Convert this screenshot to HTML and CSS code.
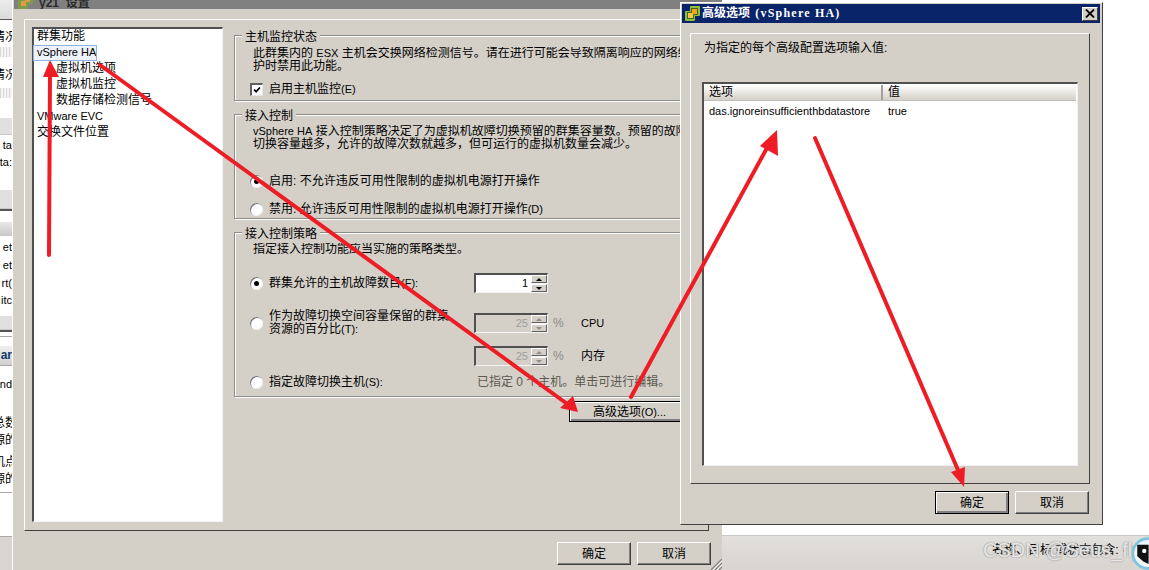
FILE: index.html
```html
<!DOCTYPE html>
<html lang="zh-CN">
<head>
<meta charset="utf-8">
<title>高级选项 (vSphere HA)</title>
<link rel="stylesheet" href="styles.css">
</head>
<body>
<div class="desktop">

  <aside class="strip">
    <div class="s-head"></div><div class="s-line"></div><i></i>
    <div class="s-t">情况</div><i></i><div class="s-stripes"></div><i></i>
    <div class="s-t">情况</div><i></i><div class="s-stripes"></div><i></i>
    <div class="s-bar"></div><i></i>
    <div class="s-l">ta</div><i></i><div class="s-l">ta:</div><i></i>
    <div class="s-bar"></div><div class="s-line"></div><i></i>
    <div class="s-grad"></div><i></i>
    <div class="s-l">et</div><i></i><div class="s-l">et</div><i></i><div class="s-l">rt(</div><i></i><div class="s-l">itc</div><i></i>
    <div class="s-bar"></div><div class="s-line"></div><i></i>
    <div class="s-thin"></div><i></i>
    <div class="s-grad s-navy">ar</div><div class="s-thin"></div><i></i>
    <div class="s-l">and</div><i></i>
    <div class="s-t">总数</div><i></i><div class="s-t">源的</div><i></i>
    <div class="s-t">机点</div><i></i><div class="s-t">源的</div><i></i>
    <div class="s-thin"></div><i></i>
    <div class="s-thin"></div><div class="s-foot"></div>
  </aside>

  <footer class="status">
    <span class="status-label">名称、目标 或状态包含: ·</span>
    <span class="watermark">CSDN @Seus_fly</span>
    <svg class="status-icon" viewBox="0 0 22 40" aria-hidden="true">
      <circle cx="21" cy="20" r="17" fill="#eef5f8" stroke="#7cc4e0" stroke-width="3"/>
      <path d="M9 10h13v22l-6-3-7-6z" fill="#111"/>
      <circle cx="17" cy="17" r="2.5" fill="#fff"/>
    </svg>
  </footer>

  <section class="window main-window">
    <header class="main-title">
      <svg class="logo logo-dim" viewBox="0 0 17 17" aria-hidden="true">
        <path d="M7 1h8a1 1 0 0 1 1 1v8a1 1 0 0 1-1 1h-4v4a1 1 0 0 1-1 1H2a1 1 0 0 1-1-1V7a1 1 0 0 1 1-1h4V2a1 1 0 0 1 1-1z" fill="#7f9a4a"/>
        <path d="M8 4h5v5H8zM4 8h5v5H4z" fill="#d8a040"/>
      </svg>
      <span>y21&nbsp;&nbsp;设置</span>
    </header>

    <div class="panel">
      <nav class="tree">
        <div class="node">群集功能</div>
        <div class="node node-selected"><span class="lat">vSphere HA</span></div>
        <div class="node node-child">虚拟机选项</div>
        <div class="node node-child">虚拟机监控</div>
        <div class="node node-child">数据存储检测信号</div>
        <div class="node"><span class="lat">VMware EVC</span></div>
        <div class="node">交换文件位置</div>
      </nav>

      <div class="settings">
        <fieldset class="group group-monitor">
          <legend>主机监控状态</legend>
          <p class="desc">此群集内的 <span class="lat">ESX</span> 主机会交换网络检测信号。请在进行可能会导致隔离响应的网络维<br>护时禁用此功能。</p>
          <div class="option option-check">
            <span class="check">
              <svg viewBox="0 0 12 12" aria-hidden="true"><path d="M2.5 5.5l2.5 2.5 4.5-5" fill="none" stroke="#000" stroke-width="2"/></svg>
            </span>
            <span>启用主机监控<span class="lat">(E)</span></span>
          </div>
        </fieldset>

        <fieldset class="group group-admission">
          <legend>接入控制</legend>
          <p class="desc"><span class="lat">vSphere HA</span> 接入控制策略决定了为虚拟机故障切换预留的群集容量数。预留的故障<br>切换容量越多，允许的故障次数就越多，但可运行的虚拟机数量会减少。</p>
          <div class="option option-radio option-first"><span class="radio radio-on"></span><span>启用: 不允许违反可用性限制的虚拟机电源打开操作</span></div>
          <div class="option option-radio option-second"><span class="radio"></span><span>禁用: 允许违反可用性限制的虚拟机电源打开操作<span class="lat">(D)</span></span></div>
        </fieldset>

        <fieldset class="group group-policy">
          <legend>接入控制策略</legend>
          <p class="desc">指定接入控制功能应当实施的策略类型。</p>
          <div class="policy-grid">
            <div class="option option-radio"><span class="radio radio-on"></span><span>群集允许的主机故障数目<span class="lat">(F):</span></span></div>
            <div class="value-cell">
              <div class="spin"><span class="spin-value lat">1</span><span class="spin-btns"><b class="up"></b><b class="down"></b></span></div>
            </div>

            <div class="option option-radio"><span class="radio"></span><span class="two-line">作为故障切换空间容量保留的群集<br>资源的百分比<span class="lat">(T):</span></span></div>
            <div class="value-cell">
              <div class="spin spin-off"><span class="spin-value lat">25</span><span class="spin-btns"><b class="up"></b><b class="down"></b></span></div>
              <span class="unit">%</span><span class="res lat">CPU</span>
            </div>

            <div></div>
            <div class="value-cell">
              <div class="spin spin-off"><span class="spin-value lat">25</span><span class="spin-btns"><b class="up"></b><b class="down"></b></span></div>
              <span class="unit">%</span><span class="res">内存</span>
            </div>

            <div class="option option-radio"><span class="radio"></span><span>指定故障切换主机<span class="lat">(S):</span></span></div>
            <div class="value-cell hint">已指定 0 个主机。单击可进行编辑。</div>
          </div>
        </fieldset>

        <button class="btn btn-default btn-advanced" type="button">高级选项<span class="lat">(O)...</span></button>
      </div>
    </div>

    <div class="actions">
      <button class="btn" type="button">确定</button>
      <button class="btn" type="button">取消</button>
    </div>
    <svg class="grip" viewBox="0 0 12 12" aria-hidden="true">
      <path d="M12 1L1 12M12 5L5 12M12 9L9 12" stroke="#808080" stroke-width="1.2"/>
      <path d="M12 3L3 12M12 7L7 12" stroke="#fff" stroke-width="1"/>
    </svg>
  </section>

  <section class="window dialog">
    <header class="dialog-title">
      <svg class="logo" viewBox="0 0 17 17" aria-hidden="true">
        <path d="M7 1h8a1 1 0 0 1 1 1v8a1 1 0 0 1-1 1h-4v4a1 1 0 0 1-1 1H2a1 1 0 0 1-1-1V7a1 1 0 0 1 1-1h4V2a1 1 0 0 1 1-1z" fill="#8fc03c"/>
        <path d="M7 3h7v7H7zM3 7h7v7H3z" fill="#3f6a1f"/>
        <path d="M8 4h5v5H8z" fill="#f4a51c"/><path d="M4 8h5v5H4z" fill="#fbc64a"/>
      </svg>
      <span class="dialog-name">高级选项 <em>(vSphere HA)</em></span>
      <button class="close" type="button" aria-label="关闭">
        <svg viewBox="0 0 10 9" aria-hidden="true"><path d="M1 0.5l8 8M9 0.5l-8 8" stroke="#000" stroke-width="1.8"/></svg>
      </button>
    </header>
    <div class="dialog-panel">
      <p class="dialog-intro">为指定的每个高级配置选项输入值:</p>
      <div class="table">
        <div class="thead"><span class="col-a">选项</span><span class="col-b">值</span></div>
        <div class="trow lat"><span class="col-a">das.ignoreinsufficienthbdatastore</span><span class="col-b">true</span></div>
      </div>
    </div>
    <div class="actions dialog-actions">
      <button class="btn btn-default" type="button">确定</button>
      <button class="btn" type="button">取消</button>
    </div>
  </section>

  <svg class="arrows" viewBox="0 0 1149 570" aria-hidden="true">
    <g fill="none" stroke="#ee1c25" stroke-width="4" stroke-linecap="round">
      <path d="M49 255L50 72"/>
      <path d="M100 65L566 403"/>
      <path d="M631 397L768 146"/>
      <path d="M815 138L958 470"/>
    </g>
    <g fill="#ee1c25">
      <path d="M50 60L59 77L43 77z"/>
      <path d="M578 412L560 408L573 396z"/>
      <path d="M777 130L778 156L760 146z"/>
      <path d="M964 487L951 472L965 467z"/>
    </g>
  </svg>
</div>
</body>
</html>
```

FILE: styles.css
```css
* { box-sizing: border-box; }
html, body { margin: 0; padding: 0; }
body { background: #fff; color: #000; font: 12px/14px "Liberation Sans", "Noto Sans CJK SC", sans-serif; }
.desktop { position: relative; width: 1149px; height: 570px; overflow: hidden; background: #fff; }
.lat { font-size: 11px; }

/* window behind, left edge */
.strip {
  width: 12px; height: 570px; overflow: hidden;
  display: grid;
  grid-template-rows:
    19px 1px 10px 14px 3px 10px 11px 14px 6px 10px 20px 17px 3px 14px 3px 14px 21px
    19px 2px 11px 14px 4px 14px 4px 14px 4px 14px 3px 14px 9px 14px 2px 4px 1px 9px
    19px 1px 11px 14px 25px 14px 3px 14px 8px 14px 3px 14px 6px 1px 43px 1px 33px;
}
.s-head { background: linear-gradient(#ececec, #dcdcdc); }
.s-line { background: #555; }
.s-thin { background: #a8a8a8; }
.s-t { display: flex; justify-content: flex-end; margin-right: -5px; white-space: nowrap; overflow: hidden; }
.s-l { display: flex; justify-content: flex-end; white-space: nowrap; overflow: hidden; font-size: 11px; }
.s-stripes { background: repeating-linear-gradient(90deg, #d8d8d8 0 1px, #f4f4f4 1px 3px); }
.s-bar { background: #e0e0e0; border-bottom: 1px solid #c8c8c8; }
.s-grad { background: linear-gradient(#e8e8e8, #c8c8c8); }
.s-navy { display: flex; justify-content: flex-end; color: #0f3868; font-weight: bold; line-height: 19px; background: linear-gradient(#f0f0f0, #d0d0d0); }
.s-foot { background: #d8d4d0; }

/* status bar of the back window */
.status {
  position: absolute; left: 722px; right: 0; top: 535px; height: 35px;
  display: flex; align-items: center; justify-content: flex-end;
  border-top: 1px solid #c8c8c8; background: linear-gradient(#e2e0dc, #d8d4d0);
  padding: 0 23px 6px 0;
}
.status-label { white-space: nowrap; }
.watermark {
  position: absolute; left: 261px; top: 1px; white-space: nowrap;
  font: 20px/26px "Liberation Sans", sans-serif; color: rgba(255, 255, 255, .8);
  text-shadow: 0 0 1px #8a8a8a, 0 0 2px #a0a0a0;
}
.status-icon { position: absolute; right: 0; top: 0; width: 20px; height: 35px; }

.window { position: absolute; background: #d4d0c8; }

/* settings window */
.main-window { left: 12px; top: 0; width: 710px; height: 570px; border-left: 1px solid #fff; }
.main-title {
  height: 9px; margin-left: 1px; background: #808080; overflow: hidden;
  display: flex; align-items: flex-end; gap: 5px; padding-left: 3px; color: #2a2a2a; font-weight: bold;
}
.main-title span { flex: none; height: 16px; line-height: 20px; }
.logo { width: 17px; height: 17px; flex: none; }
.logo-dim { margin-bottom: -1px; }
.panel {
  display: flex; gap: 11px; height: 512px; margin: 10px 13px 0 11px; padding: 7px 8px 8px 7px;
  border: 1px solid; border-color: #fff #404040 #404040 #fff;
}
.tree {
  flex: none; width: 191px; background: #fff;
  border: 2px solid; border-color: #505050 #f4f4f4 #f4f4f4 #505050;
  border-width: 2px 1px 1px 2px;
}
.node { height: 16px; line-height: 14px; padding-left: 3px; white-space: nowrap; }
.node-child { padding-left: 22px; }
.node-selected { width: 64px; margin: 0 0 0 -1px; padding-left: 4px; line-height: 14px; background: #eef2fb; outline: 1px solid #8fb4dc; outline-offset: -1px; }

.settings { flex: 1; min-width: 0; display: flex; flex-direction: column; gap: 6px; margin-top: 1px; }
.group {
  margin: 0; min-width: 0; padding: 5px 0 0 15px; overflow: visible;
  border: 1px solid #8c8c88; box-shadow: 1px 1px 0 #fff, inset 1px 1px 0 #fff;
}
.group legend { margin-left: -8px; padding: 0 3px; height: 14px; line-height: 18px; background: #d4d0c8; }
.group-monitor { height: 73px; }
.group-admission { height: 112px; padding-top: 4px; }
.group-policy { height: 172px; padding-top: 4px; }
.desc { margin: 0 0 0 3px; line-height: 13px; white-space: nowrap; overflow: hidden; }

.option { display: flex; align-items: center; gap: 6px; height: 16px; white-space: nowrap; }
.option-radio { gap: 6px; }
.option-check { margin-top: 8px; }
.option-first { margin-top: 22px; }
.option-second { margin-top: 12px; }
.two-line { line-height: 13px; }

.check {
  width: 13px; height: 13px; flex: none; background: #fff; display: block;
  border: 2px solid; border-color: #606060 #e8e8e8 #e8e8e8 #606060; border-width: 2px 1px 1px 2px;
}
.check svg { display: block; width: 10px; height: 10px; }
.radio {
  width: 13px; height: 13px; flex: none; border-radius: 50%; background: #fff; position: relative;
  box-shadow: inset 1px 1px 0 #777, inset -1px -1px 0 #f0f0f0;
}
.radio-on::after { content: ""; position: absolute; left: 4px; top: 4px; width: 5px; height: 5px; border-radius: 50%; background: #000; }

.policy-grid {
  display: grid; grid-template-columns: 224px 1fr; grid-template-rows: 40px 33px 26px 20px;
  align-items: start; margin-top: 17px;
}
.policy-grid .option, .value-cell { height: 20px; }
.value-cell { display: flex; align-items: center; white-space: nowrap; }
.hint { color: #5c5a50; padding-left: 3px; }
.spin {
  width: 74px; height: 20px; display: flex; background: #fff;
  border: 2px solid; border-color: #505050 #f4f4f4 #f4f4f4 #505050; border-width: 2px 1px 1px 2px;
}
.spin-value { flex: 1; text-align: right; padding-right: 3px; line-height: 17px; }
.spin-btns { width: 16px; display: flex; flex-direction: column; gap: 1px; background: #f4f4f4; }
.spin-btns b {
  flex: 1; display: flex; align-items: center; justify-content: center; background: #d4d0c8;
  border: 1px solid; border-color: #fff #606060 #606060 #fff;
}
.spin-btns b::after { content: ""; border: 3px solid transparent; }
.up::after { border-bottom: 3px solid #000 !important; border-top-width: 0 !important; }
.down::after { border-top: 3px solid #000 !important; border-bottom-width: 0 !important; }
.spin-off { background: #d4d0c8; color: #a0a09a; }
.spin-off .up::after { border-bottom-color: #909090 !important; }
.spin-off .down::after { border-top-color: #909090 !important; }
.unit { margin-left: 5px; width: 28px; color: #8a8a84; }

.btn {
  width: 74px; height: 23px; padding: 0; background: #d4d0c8; color: #000; font: inherit;
  border: 1px solid; border-color: #fff #404040 #404040 #fff; box-shadow: inset -1px -1px 0 #808080;
}
.btn-default { outline: 1px solid #000; outline-offset: -1px; border-color: #000; box-shadow: inset 1px 1px 0 #fff, inset -2px -2px 0 #808080; }
.btn-advanced { align-self: flex-end; width: 124px; height: 21px; margin: -2px 7px 0 0; padding-right: 3px; }
.actions { display: flex; justify-content: flex-end; gap: 6px; margin: 11px 11px 0 0; }
.grip { position: absolute; right: 0; bottom: 0; width: 12px; height: 12px; }

/* advanced options dialog */
.dialog {
  left: 680px; top: 2px; width: 423px; height: 523px; padding: 1px 2px 2px 1px;
  border: 1px solid; border-color: #fff #404040 #404040 #fff;
}
.dialog-title { height: 19px; display: flex; align-items: center; background: #0a246a; color: #fff; padding: 0 2px 0 2px; gap: 1px; }
.dialog-name { flex: 1; white-space: nowrap; font-weight: bold; }
.dialog-name em { font: bold 12px "Liberation Serif", serif; letter-spacing: 1.2px; margin-left: 2px; }
.close { width: 16px; height: 14px; padding: 0; display: flex; align-items: center; justify-content: center; background: #d4d0c8; border: 1px solid; border-color: #fff #404040 #404040 #fff; }
.close svg { width: 10px; height: 9px; }
.dialog-panel {
  height: 451px; margin: 10px 10px 0 8px; padding: 7px 11px 17px 11px; display: flex; flex-direction: column;
  border: 1px solid; border-color: #fff #404040 #404040 #fff;
}
.dialog-intro { margin: 0 0 0 2px; line-height: 14px; white-space: nowrap; }
.table {
  flex: 1; margin-top: 27px; background: #fff;
  border: 2px solid; border-color: #505050 #f0f0f0 #f0f0f0 #505050; border-width: 2px 1px 1px 2px;
  padding: 1px 1px 0 0;
}
.thead { display: flex; height: 16px; line-height: 15px; background: linear-gradient(#fff, #d4d0c8); border-bottom: 1px solid #c0c0c0; }
.trow { display: flex; height: 20px; line-height: 20px; }
.col-a { width: 179px; padding-left: 5px; white-space: nowrap; }
.thead .col-a { border-right: 2px solid #a0a0a0; }
.col-b { padding-left: 5px; }
.dialog-actions { margin: 7px 11px 0 0; }

.arrows { position: absolute; left: 0; top: 0; width: 1149px; height: 570px; pointer-events: none; }
```
